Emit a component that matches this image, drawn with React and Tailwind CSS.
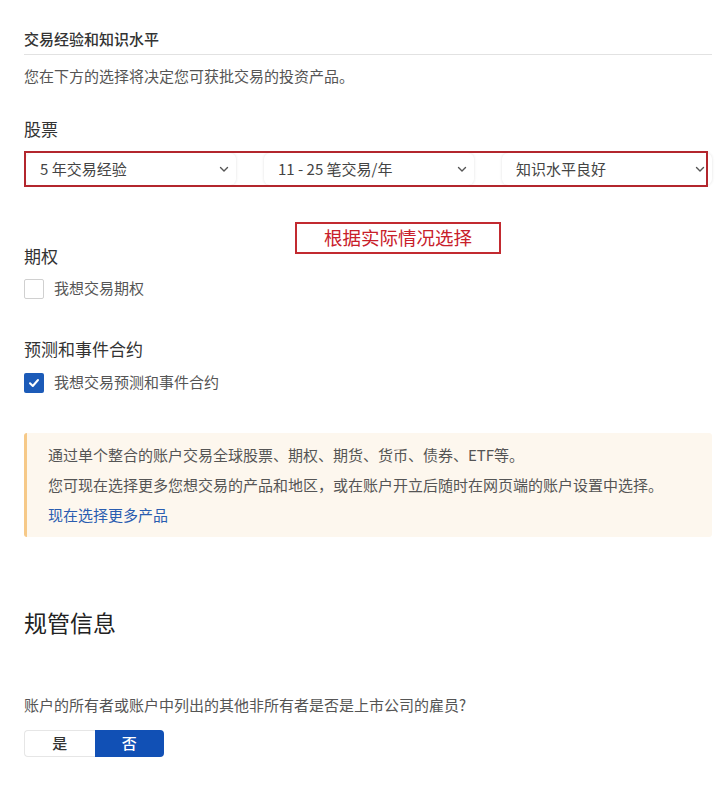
import React from 'react';

const Chevron = () => (
    <svg width="12" height="12" viewBox="0 0 12 12" fill="none" stroke="#555" strokeWidth="1.4" strokeLinecap="round" strokeLinejoin="round">
        <path d="M2.5 4.5 6 8l3.5-3.5" />
    </svg>
);

const Select = ({ label }) => (
    <div className="h-8 flex items-center justify-between pl-[14px] pr-[6px] bg-white rounded-md shadow-[0_0_3px_rgba(0,0,0,0.12)] text-[15px] text-[#444]">
        <span>{label}</span>
        <Chevron />
    </div>
);

const Checkbox = ({ checked, label }) => (
    <div className="flex items-center gap-[10px] h-5">
        {checked ? (
            <div className="w-5 h-5 rounded-[2px] bg-[#1c5bb8] flex items-center justify-center">
                <svg width="12" height="12" viewBox="0 0 12 12" fill="none" stroke="white" strokeWidth="2" strokeLinecap="round" strokeLinejoin="round">
                    <path d="M2 6.2 4.8 9 10 3" />
                </svg>
            </div>
        ) : (
            <div className="w-5 h-5 rounded-[2px] border-[1.5px] border-[#d0d0d0] bg-white" />
        )}
        <span className="text-[15px] leading-5 text-[#555] -mt-[3px]">{label}</span>
    </div>
);

const App = () => {
    return (
        <div className="relative w-[720px] h-[790px] bg-white pl-6 pr-2 pt-[29px]" style={{ fontFamily: '"Noto Sans CJK SC", "Noto Sans", sans-serif' }}>
            <div className="text-[15px] leading-5 font-medium text-[#333] pb-[5px] border-b border-[#e2e2e2]">交易经验和知识水平</div>
            <p className="mt-[11px] text-[15px] leading-5 text-[#555]">您在下方的选择将决定您可获批交易的投资产品。</p>

            <h3 className="mt-[31px] text-[17px] leading-6 text-[#333]">股票</h3>
            <div className="mt-3 ml-[2px] grid grid-cols-3 gap-7">
                <Select label="5 年交易经验" />
                <Select label="11 - 25 笔交易/年" />
                <Select label="知识水平良好" />
            </div>

            <h3 className="mt-[59px] text-[17px] leading-6 text-[#333]">期权</h3>
            <div className="mt-[11px]">
                <Checkbox label="我想交易期权" />
            </div>

            <h3 className="mt-[38px] text-[17px] leading-6 text-[#333]">预测和事件合约</h3>
            <div className="mt-3">
                <Checkbox checked label="我想交易预测和事件合约" />
            </div>

            <div className="mt-10 bg-[#fdf7ee] border-l-[3px] border-[#f6c988] rounded-[3px] pl-[21px] pt-[7px] pb-[7px] text-[15px] leading-[30px] text-[#555]">
                <p>通过单个整合的账户交易全球股票、期权、期货、货币、债券、ETF等。</p>
                <p>您可现在选择更多您想交易的产品和地区，或在账户开立后随时在网页端的账户设置中选择。</p>
                <p className="text-[#2a5db0]">现在选择更多产品</p>
            </div>

            <h2 className="mt-[69px] text-[23px] leading-8 text-[#222]">规管信息</h2>
            <p className="mt-[57px] text-[15px] leading-5 text-[#555]">账户的所有者或账户中列出的其他非所有者是否是上市公司的雇员?</p>
            <div className="mt-[15px] flex w-[140px] h-[27px] text-[15px]">
                <div className="flex-1 flex items-center justify-center border border-r-0 border-[#e6e6e6] rounded-l-[4px] text-[#333] font-medium">是</div>
                <div className="flex-1 flex items-center justify-center bg-[#1150b5] rounded-r-[4px] text-white font-medium">否</div>
            </div>

            {/* annotation overlays */}
            <div className="absolute left-6 top-[151px] w-[684px] h-[36px] border-2 border-[#b3262d] pointer-events-none" />
            <div className="absolute left-[295px] top-[222px] w-[206px] h-[32px] border-2 border-[#c22a30] flex items-center justify-center text-[18.5px] text-[#c8202a]">根据实际情况选择</div>
        </div>
    );
};

export default App;
